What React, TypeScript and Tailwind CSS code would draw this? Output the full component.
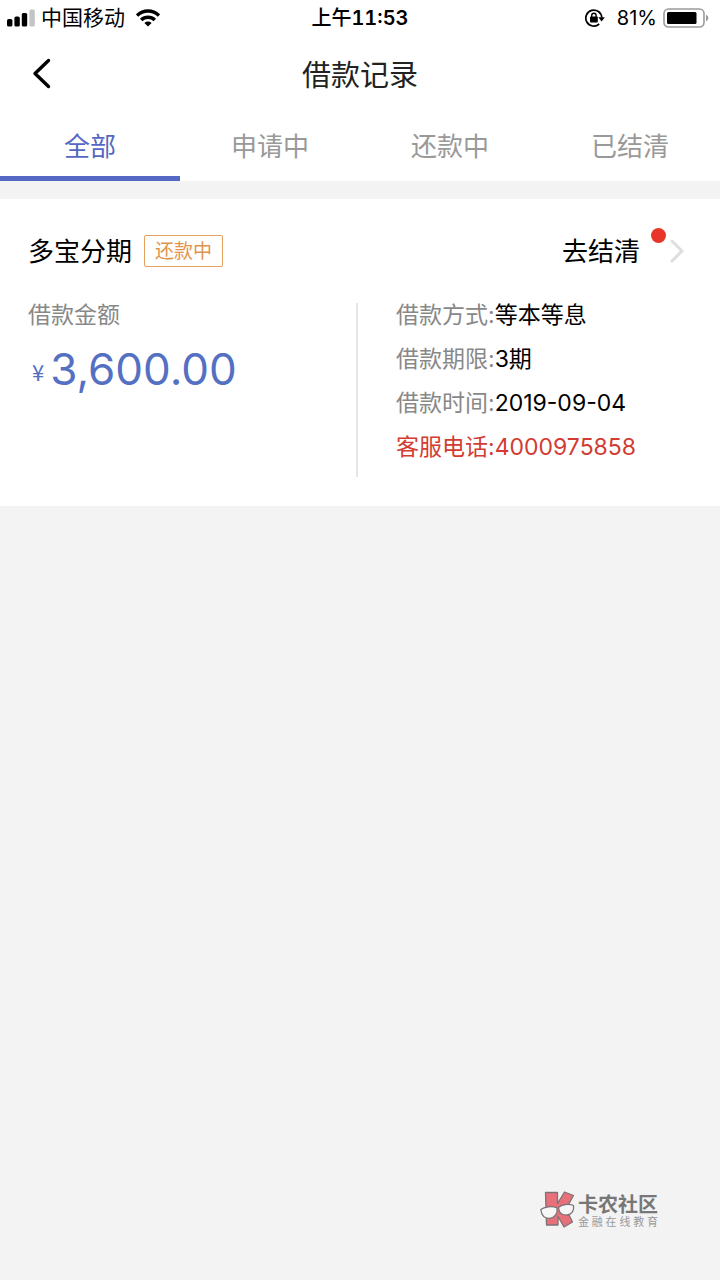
import { useState } from 'react'

const TABS = ['全部', '申请中', '还款中', '已结清']

interface Loan {
  name: string
  status: string
  action: string
  amount: string
  method: string
  term: string
  date: string
  phone: string
}

const LOANS: Loan[] = [
  {
    name: '多宝分期',
    status: '还款中',
    action: '去结清',
    amount: '3,600.00',
    method: '等本等息',
    term: '3期',
    date: '2019-09-04',
    phone: '4000975858',
  },
]

function SignalIcon() {
  return (
    <svg width="28" height="18" viewBox="0 0 28 18" aria-hidden="true">
      <rect x="0" y="10" width="5.4" height="7.5" rx="1.6" />
      <rect x="7.4" y="7.5" width="5.4" height="10" rx="1.6" />
      <rect x="14.8" y="4" width="5.4" height="13.5" rx="1.6" />
      <rect x="22.4" y="0.5" width="5.4" height="17" rx="1.6" fill="#c4c4c4" />
    </svg>
  )
}

function WifiIcon() {
  return (
    <svg width="24" height="18" viewBox="0 0 24 18" fill="none" stroke="#000" strokeWidth="3.4" aria-hidden="true">
      <path d="M1 6.6a15.6 15.6 0 0 1 22 0" />
      <path d="M5.2 11a9.6 9.6 0 0 1 13.6 0" />
      <path d="M12 17.6l-3.6-3.7a5.2 5.2 0 0 1 7.2 0z" fill="#000" stroke="none" />
    </svg>
  )
}

function RotationLockIcon() {
  return (
    <svg width="20" height="18" viewBox="0 0 20 18" fill="none" stroke="#000" strokeWidth="1.7" aria-hidden="true">
      <path d="M14.2 15a8 8 0 1 1 2.6-6.4" />
      <path d="M13.4 8.2h6.4l-3.2 4.2z" fill="#000" stroke="none" />
      <rect x="5" y="7.6" width="7.8" height="6" rx="0.8" fill="#000" stroke="none" />
      <path d="M6.7 8.4V6.4a2.2 2.2 0 0 1 4.4 0v2" strokeWidth="1.4" />
    </svg>
  )
}

function BatteryIcon() {
  return (
    <svg width="46" height="20" viewBox="0 0 46 20" aria-hidden="true">
      <rect x="1" y="1" width="40" height="18" rx="4.5" fill="none" stroke="#9b9b9b" strokeWidth="1.6" />
      <rect x="4" y="4" width="29.5" height="12" rx="1.5" />
      <path d="M43 6.8c1.4.5 2.3 1.7 2.3 3.2s-.9 2.7-2.3 3.2z" fill="#9b9b9b" />
    </svg>
  )
}

function StatusBar() {
  return (
    <div className="grid h-9 grid-cols-[1fr_auto_1fr] items-center px-[7px] text-[20px] leading-6 text-black">
      <div className="flex items-center">
        <SignalIcon />
        <span className="ml-1.5 mr-[11px] text-[21px]">中国移动</span>
        <WifiIcon />
      </div>
      <span className="font-medium">
        上午<span className="font-semibold tabular-nums">11:53</span>
      </span>
      <div className="flex items-center justify-end pr-1">
        <RotationLockIcon />
        <span className="ml-3 mr-1.5">81%</span>
        <BatteryIcon />
      </div>
    </div>
  )
}

function LoanCard({ loan }: { loan: Loan }) {
  const details = [
    { label: '借款方式', value: loan.method },
    { label: '借款期限', value: loan.term },
    { label: '借款时间', value: loan.date },
  ]

  return (
    <article className="bg-white pb-[29px] pl-7 pr-8 pt-9">
      <div className="flex h-8 items-center">
        <h2 className="pt-0.5 text-[26px] leading-8 text-black">{loan.name}</h2>
        <span className="ml-3 flex h-8 items-center rounded-[2px] border border-[#e5a05e] px-2.5 pt-0.5 text-[19px] leading-6 text-[#e0944c]">
          {loan.status}
        </span>
        <button type="button" className="relative ml-auto flex items-center pr-1 text-[26px] leading-8 text-black">
          <span className="pt-0.5">{loan.action}</span>
          <span className="absolute -top-1.5 right-[22px] h-[15px] w-[15px] rounded-full bg-[#e8352a]" />
          <svg className="ml-[30px]" width="14" height="24" viewBox="0 0 14 24" fill="none" stroke="#dedede" strokeWidth="3" strokeLinecap="round" aria-hidden="true">
            <path d="M2 2l10 10L2 22" />
          </svg>
        </button>
      </div>

      <div className="mt-9 flex text-[23px] leading-6">
        <div className="w-1/2 border-r-2 border-[#e6e6e6]">
          <p className="text-[#888]">借款金额</p>
          <p className="mt-4 flex items-center pl-1 text-[#5470c2]">
            <span className="mr-1.5 pt-1 font-['Noto_Sans_CJK_SC',sans-serif] text-[22px]">¥</span>
            <span className="text-[44px] leading-[52px]">{loan.amount}</span>
          </p>
        </div>
        <dl className="flex w-1/2 flex-col gap-5 pb-[18px] pl-[38px]">
          {details.map((d) => (
            <div key={d.label} className="flex">
              <dt className="text-[#888]">{d.label}:</dt>
              <dd className="text-black">{d.value}</dd>
            </div>
          ))}
          <div className="flex text-[#d23c32]">
            <dt>客服电话:</dt>
            <dd>
              <a href={`tel:${loan.phone}`}>{loan.phone}</a>
            </dd>
          </div>
        </dl>
      </div>
    </article>
  )
}

function CommunityLogo() {
  return (
    <footer className="mt-auto flex items-center justify-end gap-0.5 pb-[51px] pr-[62px]">
      <svg width="36" height="38" viewBox="0 0 36 38" stroke="#7d7375" strokeWidth="1.3" strokeLinejoin="round" aria-hidden="true">
        <path d="M5.500 1.500h12v11L24.500 1l9 3.500L26 18l6.500 13-8.500 5-6-10.500v8.500H6.500z" fill="#e8707a" />
        <path d="M.8 18.500C4 16 12 14.500 17 17c1 5-2 10-7.500 10.300C4.500 27.500 1.500 24 .8 18.500z" fill="#f7f7f7" />
        <path d="M18.500 16.500c3-3 10-4 15-2 .8 5-1.500 9-6.500 9.500-5 .4-8-2.500-8.500-7.500z" fill="#f7f7f7" />
      </svg>
      <div className="w-20">
        <p className="text-[20px] font-bold leading-6 text-[#777]">卡农社区</p>
        <p className="text-[11px] leading-[10px] text-[#999] [text-align-last:justify]">金融在线教育</p>
      </div>
    </footer>
  )
}

export default function App() {
  const [activeTab, setActiveTab] = useState(TABS[0])

  const loans = activeTab === TABS[0] ? LOANS : LOANS.filter((l) => l.status === activeTab)

  return (
    <div className="flex min-h-screen flex-col bg-[#f3f3f3] font-['Inter','Noto_Sans_CJK_SC',sans-serif]">
      <header className="bg-white">
        <StatusBar />
        <div className="flex h-[76px] items-center px-7">
          <button type="button" aria-label="返回" className="flex w-12 pl-1">
            <svg width="20" height="32" viewBox="0 0 20 32" fill="none" stroke="#000" strokeWidth="3.4" strokeLinecap="round" strokeLinejoin="round" aria-hidden="true">
              <path d="M16.500 2.500L3 15.500l13.500 13" />
            </svg>
          </button>
          <h1 className="flex-1 pt-1 text-center text-[29px] leading-9 text-[#222]">借款记录</h1>
          <div className="w-12" />
        </div>
        <nav className="grid grid-cols-4">
          {TABS.map((tab) => (
            <button
              key={tab}
              type="button"
              onClick={() => setActiveTab(tab)}
              className={
                tab === activeTab
                  ? 'h-[69px] border-b-[5px] border-[#5467c2] pt-1.5 text-[26px] leading-8 text-[#5467c2]'
                  : 'h-[69px] border-b-[5px] border-transparent pt-1.5 text-[26px] leading-8 text-[#999]'
              }
            >
              {tab}
            </button>
          ))}
        </nav>
      </header>

      <main className="mt-[18px]">
        {loans.map((loan) => (
          <LoanCard key={loan.name} loan={loan} />
        ))}
      </main>

      <CommunityLogo />
    </div>
  )
}
